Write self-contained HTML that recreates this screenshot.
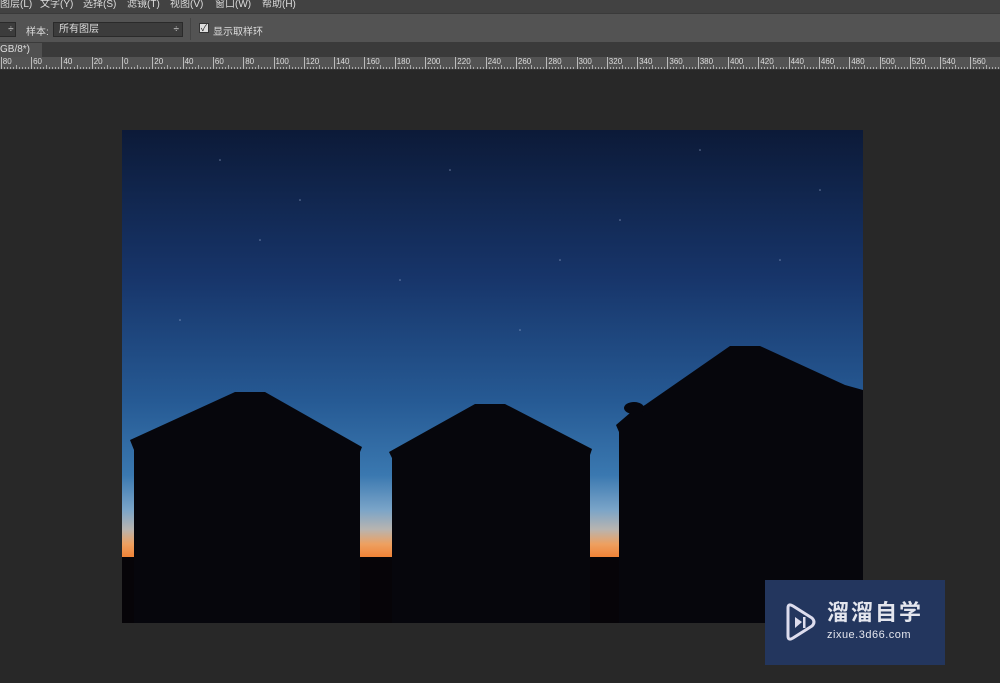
<!DOCTYPE html>
<html><head><meta charset="utf-8"><style>
*{margin:0;padding:0;box-sizing:border-box}
body{width:1000px;height:683px;overflow:hidden;background:#282828;font-family:"Liberation Sans","Noto Sans CJK SC",sans-serif;position:relative;color:#ccc}
.menu{position:absolute;top:0;left:0;width:1000px;height:13px;background:#424242;font-size:10px;line-height:10px;color:#ddd;white-space:nowrap}
.menu span{position:absolute;top:0}
.opts{position:absolute;top:13px;left:0;width:1000px;height:30px;background:#535353;border-top:1px solid #3a3a3a;border-bottom:1px solid #3a3a3a;font-size:10px}
.sel{position:absolute;top:8px;height:15px;background:#3c3c3c;border:1px solid #2a2a2a;color:#ddd;font-size:10px;line-height:13px;padding-left:5px}
.tabs{position:absolute;top:43px;left:0;width:1000px;height:14px;background:#3a3a3a}
.tab{position:absolute;left:0;top:0;width:42px;height:14px;background:#505050;font-size:10px;line-height:14px;color:#ddd}
.ruler{position:absolute;top:57px;left:0;width:1000px;height:13px;background:#535353;border-bottom:1px solid #333;overflow:hidden}
.ruler span{position:absolute;top:0;font-size:8px;color:#ddd}
</style></head><body>
<div class="menu">
<span style="left:0">图层(L)</span><span style="left:40px">文字(Y)</span><span style="left:83px">选择(S)</span><span style="left:127px">滤镜(T)</span><span style="left:170px">视图(V)</span><span style="left:215px">窗口(W)</span><span style="left:262px">帮助(H)</span>
</div>
<div class="opts">
<div class="sel" style="left:-4px;width:20px;padding:0">&nbsp;&nbsp;&nbsp;&nbsp;÷</div>
<span style="position:absolute;left:26px;top:9px;color:#ddd">样本:</span>
<div class="sel" style="left:53px;width:130px">所有图层<span style="position:absolute;right:3px">÷</span></div>
<div style="position:absolute;left:190px;top:4px;width:1px;height:22px;background:#444"></div>
<div style="position:absolute;left:199px;top:9px;width:10px;height:10px;background:#ddd;border:1px solid #333;font-size:9px;line-height:9px;color:#222;text-align:center">✓</div>
<span style="position:absolute;left:213px;top:9px;color:#ddd">显示取样环</span>
</div>
<div class="tabs"><div class="tab">GB/8*) <span style="margin-left:6px">×</span></div></div>
<div class="ruler" id="r"></div>
<svg style="position:absolute;left:122px;top:130px" width="741" height="493" viewBox="122 130 741 493">
<defs>
<linearGradient id="sky" x1="0" y1="0" x2="0" y2="1">
<stop offset="0" stop-color="#0c1a38"/>
<stop offset="0.3" stop-color="#17356a"/>
<stop offset="0.55" stop-color="#265a94"/>
<stop offset="0.7" stop-color="#3a78b0"/>
<stop offset="0.77" stop-color="#7aa4c8"/>
<stop offset="0.81" stop-color="#b8b4b0"/>
<stop offset="0.84" stop-color="#eea060"/>
<stop offset="0.87" stop-color="#f07e30"/>
<stop offset="1" stop-color="#f07e30"/>
</linearGradient>
</defs>
<rect x="122" y="130" width="741" height="493" fill="url(#sky)"/>
<g fill="#aabbdd" opacity="0.6">
<circle cx="220" cy="160" r="0.8"/><circle cx="300" cy="200" r="0.8"/><circle cx="450" cy="170" r="0.8"/><circle cx="620" cy="220" r="0.8"/><circle cx="700" cy="150" r="0.8"/><circle cx="780" cy="260" r="0.8"/><circle cx="400" cy="280" r="0.8"/><circle cx="180" cy="320" r="0.8"/><circle cx="520" cy="330" r="0.8"/><circle cx="820" cy="190" r="0.8"/><circle cx="260" cy="240" r="0.8"/><circle cx="560" cy="260" r="0.8"/>
</g>
<rect x="122" y="557" width="741" height="66" fill="#060408"/>
<g fill="#06060c">
<path d="M130 440 L235 392 L265 392 L362 447 L360 452 L360 623 L134 623 L134 450 Z"/>
<path d="M389 452 L475 404 L505 404 L592 449 L590 455 L590 623 L392 623 L392 458 Z"/>
<path d="M616 425 L630 413 L645 405 L730 346 L760 346 L845 385 L863 390 L863 623 L619 623 L619 432 Z"/>
<ellipse cx="634" cy="408" rx="10" ry="6"/>
</g>
</svg>
<div style="position:absolute;left:765px;top:580px;width:180px;height:85px;background:#23365e">
<svg style="position:absolute;left:16px;top:22px" width="36" height="40" viewBox="0 0 36 40"><path d="M7 6 L7 34 Q7 39 12 36 L31 24 Q35 20 31 16 L12 4 Q7 1 7 6" fill="none" stroke="#dde" stroke-width="3"/><path d="M14 15 L14 26 L21 20 Z" fill="#dde"/><rect x="22" y="15" width="2.5" height="11" fill="#dde"/></svg>
<div style="position:absolute;left:62px;top:20px;font-size:22px;font-weight:bold;color:#e4e6ee;letter-spacing:2px;line-height:26px">溜溜自学</div>
<div style="position:absolute;left:62px;top:49px;font-size:11px;color:#e4e6ee;letter-spacing:0.5px">zixue.3d66.com</div>
</div>
<script>
var r=document.getElementById('r'),h='';
for(var i=-4;i<30;i++){var x=122+i*30.3;var v=Math.abs(i*20);
h+='<span style="left:'+(x+2)+'px">'+v+'</span><div style="position:absolute;left:'+x+'px;top:0;width:1px;height:13px;background:#bbb"></div>';
for(var k=1;k<10;k++){h+='<div style="position:absolute;left:'+(x+k*3.03)+'px;top:'+(k==5?8:10)+'px;width:1px;height:'+(k==5?5:3)+'px;background:#aaa"></div>';}}
r.innerHTML=h;
</script>
</body></html>
